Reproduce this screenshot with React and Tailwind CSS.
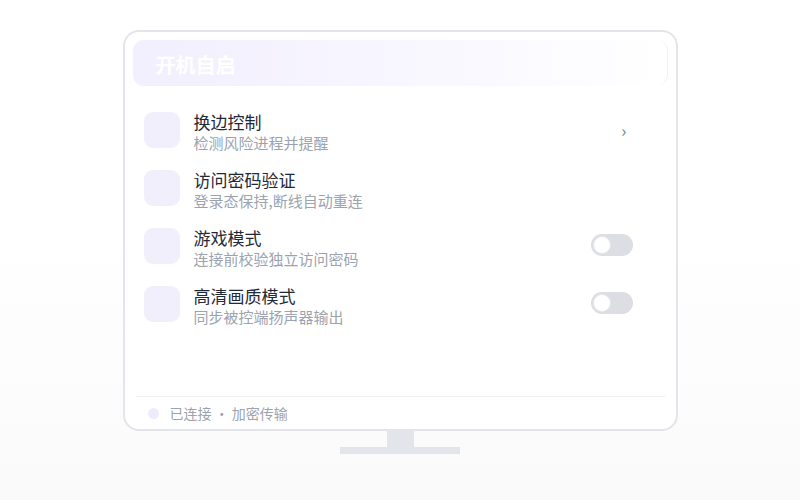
import React from 'react';

const rows = [
  { title: '换边控制', desc: '检测风险进程并提醒', action: 'chevron' },
  { title: '访问密码验证', desc: '登录态保持,断线自动重连', action: null },
  { title: '游戏模式', desc: '连接前校验独立访问密码', action: 'toggle' },
  { title: '高清画质模式', desc: '同步被控端扬声器输出', action: 'toggle' },
];

function Toggle() {
  return (
    <div className="w-[42px] h-[22px] rounded-full bg-[#dcdee3] p-[2px] flex items-center">
      <div className="w-[18px] h-[18px] rounded-full bg-white border border-[#e5e7eb]" />
    </div>
  );
}

function Row({ title, desc, action }) {
  return (
    <div className="flex items-start h-[41px]">
      <div className="w-[36px] h-[36px] rounded-[9px] bg-[#f2effd] shrink-0" />
      <div className="ml-[14px] flex flex-col">
        <span className="text-[17px] leading-[20px] text-[#1f2937]">{title}</span>
        <span className="mt-[1px] text-[15px] leading-[20px] text-[#9ca3af]">{desc}</span>
      </div>
      <div className="ml-auto">
        {action === 'chevron' && (
          <span className="block mt-[8px] mr-[6px] text-[17px] leading-[20px] text-[#737985]">›</span>
        )}
        {action === 'toggle' && (
          <div className="mt-[6px]">
            <Toggle />
          </div>
        )}
      </div>
    </div>
  );
}

export default function App() {
  return (
    <div
      className="w-[800px] h-[500px] bg-gradient-to-b from-white from-45% to-[#fafafb] flex flex-col items-center pt-[30px]"
      style={{ fontFamily: '"Noto Sans CJK SC", "Noto Sans", sans-serif' }}
    >
      <div className="w-[555px] h-[401px] border-2 border-[#e3e5ea] rounded-[16px] bg-white flex flex-col">
        <div className="mx-[8px] mt-[8px] h-[46px] rounded-[11px] bg-gradient-to-r from-[#f2effe] via-[#f8f6ff] to-white border-r border-[#f1f1f4] flex items-center pl-[23px] pt-[4px]">
          <span className="text-[20px] font-bold text-white">开机自启</span>
        </div>
        <div className="mt-[26px] pl-[19px] pr-[43px] flex flex-col gap-[17px]">
          {rows.map((r) => (
            <Row key={r.title} {...r} />
          ))}
        </div>
        <div className="flex-1" />
        <div className="mx-[11px] border-t border-[#eef0f3] h-[33px] flex items-center pl-[12px]">
          <div className="w-[11px] h-[11px] rounded-full bg-[#eeebfd]" />
          <span className="ml-[11px] text-[14px] text-[#9ca3af]">已连接 · 加密传输</span>
        </div>
      </div>
      <div className="w-[27px] h-[16px] bg-[#e2e5ea]" />
      <div className="w-[120px] h-[7px] bg-[#e2e5ea]" />
    </div>
  );
}
